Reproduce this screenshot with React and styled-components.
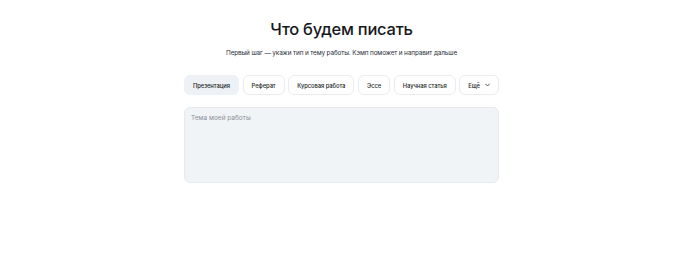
import React from "react";
import styled, { createGlobalStyle } from "styled-components";

const Global = createGlobalStyle`
  html, body { margin: 0; padding: 0; background: #ffffff; }
  body { font-family: Inter, "Noto Sans", sans-serif; color: #1d1f24; }
`;

const Page = styled.div`
  width: 683px;
  display: flex;
  flex-direction: column;
  align-items: center;
  padding-top: 18px;
`;

const Title = styled.h1`
  margin: 0;
  font-size: 16.5px;
  line-height: 22px;
  font-weight: 500;
  letter-spacing: -0.25px;
  color: #17181c;
`;

const Subtitle = styled.p`
  margin: 8px 0 0;
  font-size: 6.4px;
  line-height: 10px;
  letter-spacing: -0.12px;
  color: #2a2f3b;
  white-space: nowrap;
`;

const Column = styled.div`
  width: 315px;
  margin-top: 17px;
  display: flex;
  flex-direction: column;
  gap: 12px;
`;

const Tabs = styled.div`
  display: flex;
  justify-content: space-between;
`;

const Pill = styled.button`
  flex-shrink: 0;
  height: 20px;
  padding: 0 8px;
  border-radius: 6px;
  border: 1px solid ${(p) => (p.$active ? "#eef2f6" : "#e9ecf0")};
  background: ${(p) => (p.$active ? "#eef2f6" : "#ffffff")};
  font-family: Inter, "Noto Sans", sans-serif;
  font-size: 5.8px;
  font-weight: 500;
  letter-spacing: -0.05px;
  white-space: nowrap;
  color: #1d1f24;
  display: flex;
  align-items: center;
  gap: 5px;
  cursor: pointer;
`;

const Area = styled.textarea`
  box-sizing: border-box;
  width: 315px;
  height: 76px;
  resize: none;
  border-radius: 6px;
  border: 1px solid #e6eaef;
  background: #f1f4f7;
  padding: 6px 6px;
  font-family: Inter, "Noto Sans", sans-serif;
  font-size: 6.5px;
  color: #1d1f24;
  outline: none;
  &::placeholder { color: #8a8f98; }
`;

const Chevron = () => (
  <svg width="5" height="4" viewBox="0 0 10 6" fill="none">
    <path d="M1 1l4 4 4-4" stroke="#2a2d33" strokeWidth="1.6" strokeLinecap="round" strokeLinejoin="round" />
  </svg>
);

const items = ["Презентация", "Реферат", "Курсовая работа", "Эссе", "Научная статья"];

export default function App() {
  return (
    <>
      <Global />
      <Page>
        <Title>Что будем писать</Title>
        <Subtitle>Первый шаг — укажи тип и тему работы. Кэмп поможет и направит дальше</Subtitle>
        <Column>
          <Tabs>
            {items.map((t, i) => (
              <Pill key={t} $active={i === 0}>{t}</Pill>
            ))}
            <Pill>
              Ещё <Chevron />
            </Pill>
          </Tabs>
          <Area placeholder="Тема моей работы" />
        </Column>
      </Page>
    </>
  );
}
